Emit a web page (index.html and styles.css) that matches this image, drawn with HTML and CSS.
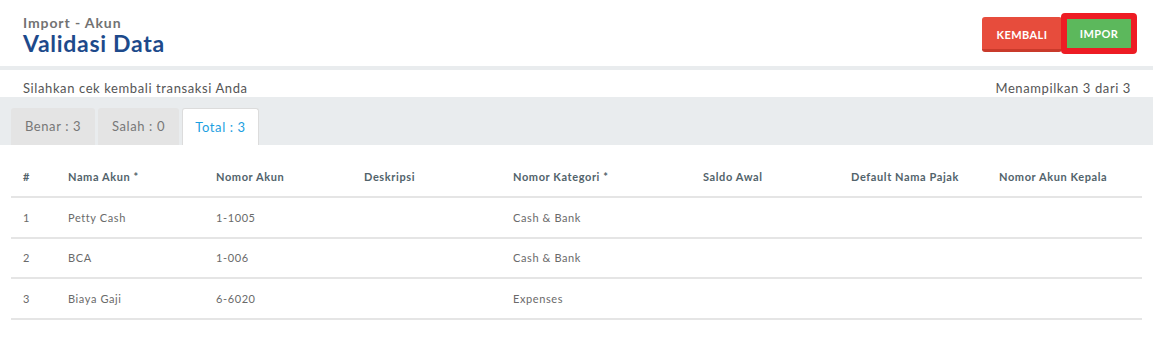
FILE: index.html
```html
<!DOCTYPE html>
<html lang="id">
<head>
  <meta charset="UTF-8" />
  <meta name="viewport" content="width=device-width, initial-scale=1.0" />
  <title>Validasi Data - Import Akun</title>
  <link rel="stylesheet" href="styles.css">
</head>
<body>

  <header class="page-header">
    <div class="titles">
      <p class="subtitle">Import - Akun</p>
      <h1>Validasi Data</h1>
    </div>
    <div class="actions">
      <button class="btn btn-back">KEMBALI</button>
      <span class="highlight">
        <button class="btn btn-import">IMPOR</button>
      </span>
    </div>
  </header>

  <div class="info-bar">
    <span>Silahkan cek kembali transaksi Anda</span>
    <span>Menampilkan 3 dari 3</span>
  </div>

  <nav class="tabs">
    <a class="tab" href="#">Benar : 3</a>
    <a class="tab" href="#">Salah : 0</a>
    <a class="tab active" href="#">Total : 3</a>
  </nav>

  <main class="content">
    <table class="data-table">
      <colgroup>
        <col style="width: 45px">
        <col style="width: 148px">
        <col style="width: 148px">
        <col style="width: 149px">
        <col style="width: 190px">
        <col style="width: 148px">
        <col style="width: 148px">
        <col>
      </colgroup>
      <thead>
        <tr>
          <th>#</th>
          <th>Nama Akun *</th>
          <th>Nomor Akun</th>
          <th>Deskripsi</th>
          <th>Nomor Kategori *</th>
          <th>Saldo Awal</th>
          <th>Default Nama Pajak</th>
          <th>Nomor Akun Kepala</th>
        </tr>
      </thead>
      <tbody>
        <tr>
          <td>1</td>
          <td>Petty Cash</td>
          <td>1-1005</td>
          <td></td>
          <td>Cash &amp; Bank</td>
          <td></td>
          <td></td>
          <td></td>
        </tr>
        <tr>
          <td>2</td>
          <td>BCA</td>
          <td>1-006</td>
          <td></td>
          <td>Cash &amp; Bank</td>
          <td></td>
          <td></td>
          <td></td>
        </tr>
        <tr>
          <td>3</td>
          <td>Biaya Gaji</td>
          <td>6-6020</td>
          <td></td>
          <td>Expenses</td>
          <td></td>
          <td></td>
          <td></td>
        </tr>
      </tbody>
    </table>
  </main>

</body>
</html>
```

FILE: styles.css
```css
body {
  margin: 0;
  font-family: 'Lato', 'Noto Sans', sans-serif;
  background-color: #fff;
  color: #555;
  letter-spacing: 0.6px;
}

.page-header {
  display: flex;
  justify-content: space-between;
  align-items: flex-start;
  padding: 13px 16px 0 23px;
  height: 53px;
  border-bottom: 4px solid #e9ecee;
}

.subtitle {
  margin: 2px 0 0;
  font-size: 14px;
  font-weight: 700;
  color: #727272;
  line-height: 15px;
  letter-spacing: 0.9px;
}

h1 {
  margin: 1px 0 0;
  font-size: 23px;
  font-weight: 700;
  color: #1d4a8b;
  line-height: 24px;
  letter-spacing: 0.7px;
}

.actions {
  display: flex;
  align-items: flex-start;
  padding-top: 4px;
}

.btn {
  border: none;
  border-radius: 3px;
  color: white;
  font-family: inherit;
  font-weight: 700;
  font-size: 11px;
  letter-spacing: 0.4px;
  cursor: pointer;
}

.btn-back {
  background-color: #e74c3c;
  border-bottom: 3px solid #c93a2b;
  width: 80px;
  height: 35px;
  padding: 2px 0 0;
  margin-right: -1px;
}

.highlight {
  display: inline-flex;
  position: relative;
  margin-top: -4px;
  border: 6px solid #ed1c24;
  border-radius: 4px;
}

.btn-import {
  background-color: #5cb85c;
  border-radius: 0;
  width: 64px;
  height: 29px;
}

.info-bar {
  display: flex;
  justify-content: space-between;
  padding: 0 22px 0 23px;
  height: 27px;
  line-height: 36px;
  font-size: 13px;
  color: #555;
}

.tabs {
  display: flex;
  gap: 3px;
  background-color: #e9ecee;
  padding: 11px 11px 0;
  height: 37px;
}

.tab {
  width: 84px;
  box-sizing: border-box;
  background-color: #e4e4e4;
  border-radius: 3px 3px 0 0;
  text-align: center;
  line-height: 37px;
  font-size: 13px;
  color: #777;
  text-decoration: none;
}

.tab:nth-child(2) {
  width: 81px;
}

.tab.active {
  width: 77px;
  background-color: #fff;
  border: 1px solid #dcdcdc;
  border-bottom: none;
  line-height: 36px;
  color: #1ba0e1;
}

.content {
  padding: 12px 11px 0;
}

.data-table {
  width: 100%;
  table-layout: fixed;
  border-collapse: collapse;
  font-size: 11px;
}

.data-table th {
  text-align: left;
  font-weight: 700;
  color: #52636b;
  padding: 0 12px;
  height: 39px;
  border-bottom: 2px solid #e5e5e5;
}

.data-table td {
  padding: 0 12px;
  height: 38.5px;
  color: #6a6a6a;
  border-bottom: 2px solid #e5e5e5;
}
```
